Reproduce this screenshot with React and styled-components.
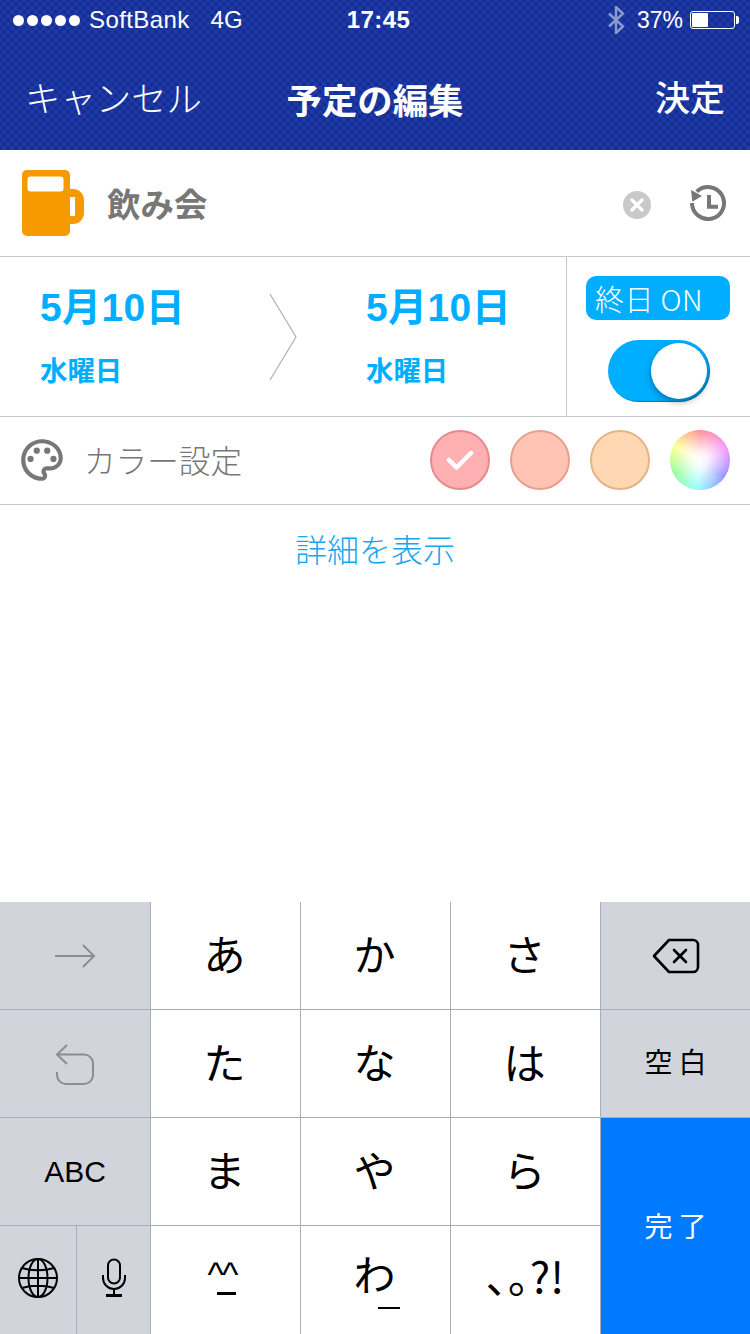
import React from "react";
import styled, { createGlobalStyle } from "styled-components";
import { MdOutlinePalette } from "react-icons/md";

const JP = `"Noto Sans CJK JP", "Liberation Sans", sans-serif`;
const LATIN = `"Liberation Sans", "Noto Sans CJK JP", sans-serif`;

const GlobalStyle = createGlobalStyle`
  html, body {
    margin: 0;
    padding: 0;
    background: #fff;
  }
  #root {
    width: 750px;
    height: 1334px;
    overflow: hidden;
  }
`;

const Page = styled.div`
  width: 750px;
  height: 1334px;
  display: flex;
  flex-direction: column;
  font-family: ${JP};
`;

const Header = styled.header`
  height: 150px;
  color: #fff;
  background-color: #14298a;
  background-image:
    radial-gradient(circle at center, #1f3fb0 0, #1b37a3 2px, rgba(20, 40, 130, 0) 3.5px),
    radial-gradient(circle at center, #1f3fb0 0, #1b37a3 2px, rgba(20, 40, 130, 0) 3.5px);
  background-size: 8px 8px;
  background-position: 0 0, 4px 4px;
`;

const StatusBar = styled.div`
  height: 40px;
  display: grid;
  grid-template-columns: 1fr auto 1fr;
  align-items: center;
  font-family: ${LATIN};
  font-size: 24px;
`;

const StatusLeft = styled.div`
  display: flex;
  align-items: center;
  padding-left: 13px;
`;

const Dot = styled.span`
  width: 11px;
  height: 11px;
  margin-right: 3px;
  border-radius: 50%;
  background: #fff;
`;

const Carrier = styled.span`
  margin-left: 6px;
  letter-spacing: 0.4px;
`;

const Network = styled.span`
  margin-left: 21px;
`;

const Time = styled.div`
  font-weight: 700;
  padding-left: 7px;
  letter-spacing: 0.4px;
`;

const StatusRight = styled.div`
  display: flex;
  align-items: center;
  justify-content: flex-end;
  padding-right: 15px;
`;

const Percent = styled.span`
  margin: 0 7px 0 12px;
  font-size: 23px;
`;

const Battery = styled.div`
  width: 45px;
  height: 18px;
  box-sizing: border-box;
  border: 1px solid #fff;
  border-radius: 3px;
  padding: 1px;
  display: flex;
  position: relative;
  &::before {
    content: "";
    width: 16px;
    background: #fff;
    border-radius: 1px;
  }
  &::after {
    content: "";
    position: absolute;
    right: -5px;
    top: 4px;
    width: 3px;
    height: 8px;
    background: #fff;
    border-radius: 0 2px 2px 0;
  }
`;

const NavBar = styled.nav`
  height: 110px;
  padding: 4px 25px 0;
  box-sizing: border-box;
  display: grid;
  grid-template-columns: 1fr auto 1fr;
  align-items: center;
`;

const NavCancel = styled.div`
  font-size: 35.4px;
  font-weight: 300;
  line-height: 50px;
  white-space: nowrap;
`;

const NavTitle = styled.div`
  font-size: 35.4px;
  font-weight: 700;
  line-height: 50px;
  padding-top: 4px;
`;

const NavDone = styled.div`
  font-size: 35px;
  font-weight: 500;
  line-height: 50px;
  padding-bottom: 2px;
  text-align: right;
`;

const TitleRow = styled.div`
  height: 107px;
  box-sizing: border-box;
  border-bottom: 1px solid #c8c8c8;
  display: flex;
  align-items: center;
  padding: 0 24px 0 22px;
`;

const TitleText = styled.div`
  margin: 0 0 2px 23px;
  flex: 1;
  font-size: 33.5px;
  font-weight: 700;
  color: #777;
`;

const ClearButton = styled.div`
  width: 28px;
  height: 28px;
  margin: 4px 39px 0 0;
  border-radius: 50%;
  background: #c9c9c9;
  display: flex;
  align-items: center;
  justify-content: center;
`;

const DateRow = styled.div`
  height: 160px;
  box-sizing: border-box;
  border-bottom: 1px solid #c8c8c8;
  display: flex;
`;

const DateRange = styled.div`
  width: 567px;
  box-sizing: border-box;
  border-right: 1px solid #c8c8c8;
  display: grid;
  grid-template-columns: 229px auto 1fr;
  align-items: center;
  padding-left: 40px;
`;

const DateBlock = styled.div`
  color: #00aeff;
  font-family: ${LATIN};
  font-weight: 700;
`;

const DateMain = styled.div`
  font-size: 39px;
  line-height: 50px;
  letter-spacing: 0.4px;
  white-space: nowrap;
`;

const DateSub = styled.div`
  font-size: 27.4px;
  line-height: 36px;
  margin-top: 21px;
`;

const Chevron = styled.svg`
  width: 28px;
  height: 88px;
  margin-right: 69px;
  display: block;
`;

const AllDay = styled.div`
  flex: 1;
  display: flex;
  flex-direction: column;
  align-items: center;
  padding-top: 19px;
`;

const AllDayBadge = styled.div`
  width: 144px;
  height: 44px;
  margin-right: 1px;
  box-sizing: border-box;
  padding-left: 9px;
  border-radius: 10px;
  background: #00aeff;
  color: #fff;
  font-size: 29px;
  font-weight: 300;
  line-height: 44px;
  letter-spacing: 0.4px;
  white-space: nowrap;
`;

const Toggle = styled.div`
  width: 102px;
  height: 62px;
  margin-top: 20px;
  box-sizing: border-box;
  padding: 3px;
  border-radius: 31px;
  background: #00aeff;
  box-shadow: inset -1px -1px 1px rgba(0, 80, 130, 0.5);
  display: flex;
  justify-content: flex-end;
`;

const Knob = styled.div`
  width: 56px;
  height: 56px;
  border-radius: 50%;
  background: #fff;
  box-shadow: 0 3px 7px rgba(0, 0, 0, 0.35);
`;

const ColorRow = styled.div`
  height: 88px;
  box-sizing: border-box;
  border-bottom: 1px solid #c8c8c8;
  display: flex;
  align-items: center;
  padding: 0 20px 2px 17px;
`;

const PaletteIcon = styled(MdOutlinePalette)`
  width: 50px;
  height: 50px;
  color: #777;
  flex: none;
`;

const ColorLabel = styled.div`
  flex: 1;
  margin-left: 17px;
  padding-bottom: 2px;
  font-size: 31.6px;
  font-weight: 300;
  color: #777;
`;

const Swatches = styled.div`
  display: flex;
  gap: 20px;
`;

const Swatch = styled.div`
  width: 60px;
  height: 60px;
  box-sizing: border-box;
  border-radius: 50%;
  border: 2px solid ${(p) => p.$edge};
  background: ${(p) => p.$fill};
  display: flex;
  align-items: center;
  justify-content: center;
`;

const ColorWheel = styled.div`
  width: 60px;
  height: 60px;
  border-radius: 50%;
  background:
    radial-gradient(circle at center, #fff 0, rgba(255, 255, 255, 0.85) 20%, rgba(255, 255, 255, 0) 70%),
    conic-gradient(#ff8f95, #f795ff 65deg, #9595ff 125deg, #90ffff 185deg, #95ff95 245deg, #ffff90 300deg, #ff8f95);
`;

const DetailLink = styled.div`
  height: 92px;
  box-sizing: border-box;
  padding-bottom: 6px;
  display: flex;
  align-items: center;
  justify-content: center;
  font-size: 32px;
  font-weight: 300;
  color: #16a6ef;
`;

const Keyboard = styled.div`
  margin-top: auto;
  height: 432px;
  display: grid;
  grid-template-columns: 151px 150px 150px 150px 149px;
  grid-template-rows: 108px 108px 108px 108px;
`;

const Key = styled.div`
  box-sizing: border-box;
  background: ${(p) => (p.$side ? "#d1d5db" : "#fff")};
  border-right: ${(p) => (p.$last ? "0" : "1px solid #a8adb6")};
  border-bottom: ${(p) => (p.$bottom ? "0" : "1px solid #a8adb6")};
  display: flex;
  align-items: center;
  justify-content: center;
  color: #000;
  padding-bottom: 6px;
  position: relative;
`;

const KanaLabel = styled.span`
  font-size: 42px;
  font-weight: 400;
  line-height: 1;
  margin-right: 2px;
`;

const SideLabel = styled.span`
  font-size: 28px;
  font-weight: 400;
  letter-spacing: 6px;
  padding-left: 6px;
`;

const AbcLabel = styled.span`
  font-family: ${LATIN};
  font-size: 30px;
  padding-top: 6px;
`;

const FaceLabel = styled.span`
  font-family: ${LATIN};
  font-size: 35px;
  letter-spacing: -2px;
  line-height: 1;
  margin: 0 7px 6px 0;
  white-space: nowrap;
  position: relative;
  &::after {
    content: "";
    position: absolute;
    left: 9px;
    bottom: -3px;
    width: 19px;
    height: 3px;
    background: #000;
  }
`;

const WaLabel = styled(KanaLabel)`
  margin: 0 0 8px -2px;
`;

const WaMark = styled.span`
  position: absolute;
  left: 77px;
  top: 81px;
  width: 22px;
  height: 2px;
  background: #000;
`;

const PunctLabel = styled.span`
  font-size: 43px;
  line-height: 1;
  padding-bottom: 6px;
  white-space: nowrap;
`;

const ReturnKey = styled.div`
  grid-column: 5;
  grid-row: 3 / span 2;
  background: #007aff;
  color: #fff;
  font-size: 28px;
  letter-spacing: 6px;
  padding: 0 0 2px 6px;
  box-sizing: border-box;
  display: flex;
  align-items: center;
  justify-content: center;
`;

const SplitKeys = styled.div`
  display: grid;
  grid-template-columns: 77px 74px;
`;

const KeyIcon = styled.svg`
  display: block;
  margin-top: ${(p) => p.$dy || 0}px;
`;

function BeerMug() {
  return (
    <svg width="62" height="66" viewBox="0 0 62 66">
      <path
        fill="#f59a00"
        d="M5 0h38a5 5 0 0 1 5 5v14h3a11 11 0 0 1 11 11v13a11 11 0 0 1-11 11h-3v7a5 5 0 0 1-5 5H5a5 5 0 0 1-5-5V5a5 5 0 0 1 5-5zM48 27v19h5V27z"
        fillRule="evenodd"
      />
      <rect x="5.5" y="6.5" width="36" height="15" rx="3" fill="#fff" />
    </svg>
  );
}

function HistoryClock() {
  return (
    <svg width="36" height="36" viewBox="0 0 36 36" fill="none" stroke="#777" strokeWidth="4">
      <path d="M2 18A16 16 0 1 0 6.7 6.7" />
      <path d="M1 5l1.3 11.7L12 11z" fill="#777" stroke="none" />
      <path d="M19 10v11.7h9" />
    </svg>
  );
}

function Bluetooth() {
  return (
    <svg width="18" height="28" viewBox="0 0 18 28" fill="none" stroke="#8c9bc9" strokeWidth="2.4">
      <path d="M2 7.5l14 13L9 27V1l7 6.5-14 13" />
    </svg>
  );
}

function Globe() {
  return (
    <KeyIcon $dy={1} width="42" height="42" viewBox="0 0 42 42" fill="none" stroke="#000" strokeWidth="2">
      <circle cx="21" cy="21" r="19" />
      <ellipse cx="21" cy="21" rx="9.5" ry="19" />
      <path d="M21 2v38M2 21h38M5 11c9 3 23 3 32 0M5 31c9-3 23-3 32 0" />
    </KeyIcon>
  );
}

function Mic() {
  return (
    <KeyIcon $dy={1} width="26" height="40" viewBox="0 0 26 40" fill="none" stroke="#000" strokeWidth="2">
      <rect x="7" y="1.5" width="12" height="24" rx="6" />
      <path d="M2 17v3a11 11 0 0 0 22 0v-3M13 31v6" />
      <path d="M5 37.5h16" strokeWidth="3" />
    </KeyIcon>
  );
}

function Backspace() {
  return (
    <KeyIcon $dy={6} width="48" height="36" viewBox="0 0 48 36" fill="none" stroke="#000" strokeWidth="2.6" strokeLinejoin="round">
      <path d="M17 2h24a5 5 0 0 1 5 5v22a5 5 0 0 1-5 5H17L2 18z" />
      <path d="M22 12l12 12M34 12L22 24" strokeLinecap="round" />
    </KeyIcon>
  );
}

function ArrowRight() {
  return (
    <KeyIcon $dy={6} width="42" height="24" viewBox="0 0 42 24" fill="none" stroke="#8a8e94" strokeWidth="2">
      <path d="M1 12h39M29 1l11 11-11 11" />
    </KeyIcon>
  );
}

function Undo() {
  return (
    <KeyIcon $dy={8} width="40" height="42" viewBox="0 0 40 42" fill="none" stroke="#8a8e94" strokeWidth="2">
      <path d="M12 1L2 10.5 12 20M2 10.5h27a9 9 0 0 1 9 9V31a9 9 0 0 1-9 9H11a9 9 0 0 1-9-9v-3" />
    </KeyIcon>
  );
}

function Check() {
  return (
    <svg width="28" height="22" viewBox="0 0 28 22" fill="none" stroke="#fff" strokeWidth="4.5" strokeLinecap="round" strokeLinejoin="round">
      <path d="M3 11l7.5 7.5L25 4" />
    </svg>
  );
}

function ClearCross() {
  return (
    <svg width="14" height="14" viewBox="0 0 14 14" stroke="#fff" strokeWidth="3.2" strokeLinecap="round">
      <path d="M2 2l10 10M12 2L2 12" />
    </svg>
  );
}

const swatches = [
  { fill: "#ffb0b2", edge: "#e68a8c", checked: true },
  { fill: "#ffc4b3", edge: "#e8a08c" },
  { fill: "#ffd7b3", edge: "#e6b384" },
];

export default function App() {
  return (
    <Page>
      <GlobalStyle />
      <Header>
        <StatusBar>
          <StatusLeft>
            <Dot />
            <Dot />
            <Dot />
            <Dot />
            <Dot />
            <Carrier>SoftBank</Carrier>
            <Network>4G</Network>
          </StatusLeft>
          <Time>17:45</Time>
          <StatusRight>
            <Bluetooth />
            <Percent>37%</Percent>
            <Battery />
          </StatusRight>
        </StatusBar>
        <NavBar>
          <NavCancel>キャンセル</NavCancel>
          <NavTitle>予定の編集</NavTitle>
          <NavDone>決定</NavDone>
        </NavBar>
      </Header>

      <TitleRow>
        <BeerMug />
        <TitleText>飲み会</TitleText>
        <ClearButton>
          <ClearCross />
        </ClearButton>
        <HistoryClock />
      </TitleRow>

      <DateRow>
        <DateRange>
          <DateBlock>
            <DateMain>5月10日</DateMain>
            <DateSub>水曜日</DateSub>
          </DateBlock>
          <Chevron viewBox="0 0 28 88" fill="none" stroke="#aaa" strokeWidth="1.1">
            <path d="M1 1l26 43L1 87" />
          </Chevron>
          <DateBlock>
            <DateMain>5月10日</DateMain>
            <DateSub>水曜日</DateSub>
          </DateBlock>
        </DateRange>
        <AllDay>
          <AllDayBadge>終日 ON</AllDayBadge>
          <Toggle>
            <Knob />
          </Toggle>
        </AllDay>
      </DateRow>

      <ColorRow>
        <PaletteIcon />
        <ColorLabel>カラー設定</ColorLabel>
        <Swatches>
          {swatches.map((s) => (
            <Swatch key={s.fill} $fill={s.fill} $edge={s.edge}>
              {s.checked && <Check />}
            </Swatch>
          ))}
          <ColorWheel />
        </Swatches>
      </ColorRow>

      <DetailLink>詳細を表示</DetailLink>

      <Keyboard>
        <Key $side>
          <ArrowRight />
        </Key>
        <Key><KanaLabel>あ</KanaLabel></Key>
        <Key><KanaLabel>か</KanaLabel></Key>
        <Key><KanaLabel>さ</KanaLabel></Key>
        <Key $side $last>
          <Backspace />
        </Key>

        <Key $side>
          <Undo />
        </Key>
        <Key><KanaLabel>た</KanaLabel></Key>
        <Key><KanaLabel>な</KanaLabel></Key>
        <Key><KanaLabel>は</KanaLabel></Key>
        <Key $side $last>
          <SideLabel>空白</SideLabel>
        </Key>

        <Key $side>
          <AbcLabel>ABC</AbcLabel>
        </Key>
        <Key><KanaLabel>ま</KanaLabel></Key>
        <Key><KanaLabel>や</KanaLabel></Key>
        <Key><KanaLabel>ら</KanaLabel></Key>
        <ReturnKey>完了</ReturnKey>

        <SplitKeys>
          <Key $side $bottom>
            <Globe />
          </Key>
          <Key $side $bottom>
            <Mic />
          </Key>
        </SplitKeys>
        <Key $bottom>
          <FaceLabel>^^</FaceLabel>
        </Key>
        <Key $bottom>
          <WaLabel>わ</WaLabel>
          <WaMark />
        </Key>
        <Key $bottom>
          <PunctLabel>､｡?!</PunctLabel>
        </Key>
      </Keyboard>
    </Page>
  );
}
